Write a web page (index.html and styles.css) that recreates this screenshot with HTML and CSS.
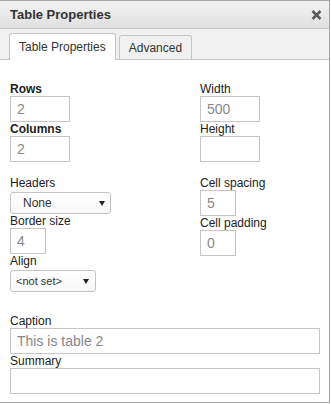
FILE: index.html
```html
<!DOCTYPE html>
<html lang="en">
<head>
    <meta charset="UTF-8">
    <title>Table Properties</title>
    <link rel="stylesheet" href="styles.css">
</head>
<body>
    <div class="dialog">
        <div class="titlebar">
            <span class="title">Table Properties</span>
            <svg class="close" width="11" height="10" viewBox="0 0 11 10">
                <path d="M1.5 1 L9.5 9 M9.5 1 L1.5 9" stroke="#5c5c5c" stroke-width="2.6" fill="none"/>
            </svg>
        </div>

        <div class="tabs">
            <div class="tab active">Table Properties</div>
            <div class="tab">Advanced</div>
        </div>

        <div class="panel">
            <div class="cols">
                <div class="col">
                    <label class="bold">Rows</label>
                    <input class="field w60" value="2">
                    <label class="bold">Columns</label>
                    <input class="field w60" value="2">
                </div>
                <div class="col">
                    <label>Width</label>
                    <input class="field w60" value="500">
                    <label>Height</label>
                    <input class="field w60" value="">
                </div>
            </div>

            <div class="cols second">
                <div class="col">
                    <label>Headers</label>
                    <div class="select headers"><span>None</span><i class="caret"></i></div>
                    <label>Border size</label>
                    <input class="field w36" value="4">
                    <label>Align</label>
                    <div class="select align"><span>&lt;not set&gt;</span><i class="caret"></i></div>
                </div>
                <div class="col">
                    <label>Cell spacing</label>
                    <input class="field w36" value="5">
                    <label>Cell padding</label>
                    <input class="field w36" value="0">
                </div>
            </div>

            <div class="col wide">
                <label>Caption</label>
                <input class="field full" value="This is table 2">
                <label>Summary</label>
                <input class="field full" value="">
            </div>
        </div>
    </div>
</body>
</html>
```

FILE: styles.css
```css
body {
    margin: 0;
    padding: 0;
    background: #fff;
    font-family: 'Liberation Sans', Arial, sans-serif;
}

.dialog {
    width: 330px;
    height: 403px;
    box-sizing: border-box;
    border: 1px solid #a3a3a3;
    border-left: none;
    background: #fff;
}

.titlebar {
    height: 27px;
    display: flex;
    align-items: center;
    justify-content: space-between;
    padding: 0 7px 0 10px;
    background: linear-gradient(#f2f2f2, #e0e0e0);
    border-bottom: 1px solid #c4c4c4;
}

.title {
    font-size: 13px;
    font-weight: bold;
    color: #333;
}

.close {
    display: block;
}

.tabs {
    height: 30px;
    display: flex;
    align-items: flex-end;
    gap: 3px;
    padding-left: 9px;
    background: #f0f0f0;
    border-bottom: 1px solid #c5c5c5;
}

.tab {
    height: 24px;
    box-sizing: border-box;
    padding: 0 9px;
    display: flex;
    align-items: center;
    font-size: 12px;
    color: #333;
    background: #f0f0f0;
    border: 1px solid #c5c5c5;
    border-bottom: none;
    border-radius: 3px 3px 0 0;
}

.tab.active {
    height: 27px;
    margin-bottom: -1px;
    background: #fff;
}

.panel {
    padding: 22px 10px 0 10px;
}

.cols {
    display: grid;
    grid-template-columns: 190px 1fr;
}

.cols.second {
    margin-top: 14px;
}

.col {
    display: flex;
    flex-direction: column;
    align-items: flex-start;
}

.col.wide {
    margin-top: 22px;
}

label {
    display: block;
    font-size: 12px;
    line-height: 14px;
    color: #222;
}

label.bold {
    font-weight: bold;
}

.field {
    height: 26px;
    box-sizing: border-box;
    margin: 0;
    padding: 0 6px;
    border: 1px solid #c5c5c5;
    border-radius: 0;
    font-family: 'Liberation Sans', Arial, sans-serif;
    font-size: 14px;
    color: #888;
    background: #fff;
    outline: none;
}

.w60 {
    width: 60px;
}

.w36 {
    width: 36px;
}

.full {
    width: 310px;
}

.select {
    margin-top: 2px;
    height: 22px;
    box-sizing: border-box;
    display: flex;
    align-items: center;
    justify-content: space-between;
    border: 1px solid #c5c5c5;
    border-radius: 3px;
    background: linear-gradient(#fff, #f7f7f7);
    font-size: 12px;
    color: #333;
}

.select.headers {
    width: 101px;
    padding: 0 5px 0 12px;
}

.select.align {
    width: 86px;
    padding: 0 6px 0 5px;
    font-size: 11px;
}

.caret {
    width: 0;
    height: 0;
    border-left: 3px solid transparent;
    border-right: 3px solid transparent;
    border-top: 5px solid #222;
}
```
